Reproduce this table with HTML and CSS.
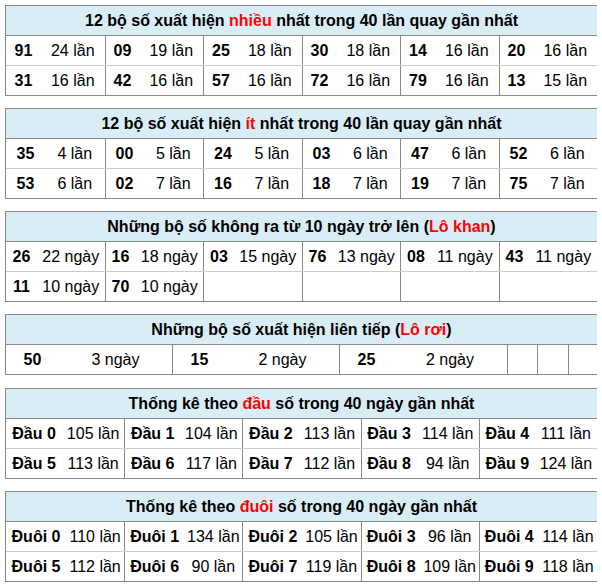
FILE: index.html
```html
<!DOCTYPE html>
<html lang="vi">
<head>
<meta charset="utf-8">
<title>Thống kê lô</title>
<link rel="stylesheet" href="styles.css">
</head>
<body>
<section class="box t1">
  <div class="head">12 bộ số xuất hiện <span class="red">nhiều</span> nhất trong 40 lần quay gần nhất</div>
  <div class="row">
    <div class="n">91</div><div class="v">24 lần</div>
    <div class="n">09</div><div class="v">19 lần</div>
    <div class="n">25</div><div class="v">18 lần</div>
    <div class="n">30</div><div class="v">18 lần</div>
    <div class="n">14</div><div class="v">16 lần</div>
    <div class="n">20</div><div class="v">16 lần</div>
  </div>
  <div class="row">
    <div class="n">31</div><div class="v">16 lần</div>
    <div class="n">42</div><div class="v">16 lần</div>
    <div class="n">57</div><div class="v">16 lần</div>
    <div class="n">72</div><div class="v">16 lần</div>
    <div class="n">79</div><div class="v">16 lần</div>
    <div class="n">13</div><div class="v">15 lần</div>
  </div>
</section>

<section class="box t2">
  <div class="head">12 bộ số xuất hiện <span class="red">ít</span> nhất trong 40 lần quay gần nhất</div>
  <div class="row">
    <div class="n">35</div><div class="v">4 lần</div>
    <div class="n">00</div><div class="v">5 lần</div>
    <div class="n">24</div><div class="v">5 lần</div>
    <div class="n">03</div><div class="v">6 lần</div>
    <div class="n">47</div><div class="v">6 lần</div>
    <div class="n">52</div><div class="v">6 lần</div>
  </div>
  <div class="row">
    <div class="n">53</div><div class="v">6 lần</div>
    <div class="n">02</div><div class="v">7 lần</div>
    <div class="n">16</div><div class="v">7 lần</div>
    <div class="n">18</div><div class="v">7 lần</div>
    <div class="n">19</div><div class="v">7 lần</div>
    <div class="n">75</div><div class="v">7 lần</div>
  </div>
</section>

<section class="box t3">
  <div class="head">Những bộ số không ra từ 10 ngày trở lên (<span class="red">Lô khan</span>)</div>
  <div class="row">
    <div class="n">26</div><div class="v">22 ngày</div>
    <div class="n">16</div><div class="v">18 ngày</div>
    <div class="n">03</div><div class="v">15 ngày</div>
    <div class="n">76</div><div class="v">13 ngày</div>
    <div class="n">08</div><div class="v">11 ngày</div>
    <div class="n">43</div><div class="v">11 ngày</div>
  </div>
  <div class="row">
    <div class="n">11</div><div class="v">10 ngày</div>
    <div class="n">70</div><div class="v">10 ngày</div>
    <div class="e span2"></div>
    <div class="e span2"></div>
    <div class="e span2"></div>
    <div class="e span2"></div>
  </div>
</section>

<section class="box t4">
  <div class="head">Những bộ số xuất hiện liên tiếp (<span class="red">Lô rơi</span>)</div>
  <div class="row">
    <div class="n">50</div><div class="v">3 ngày</div>
    <div class="n">15</div><div class="v">2 ngày</div>
    <div class="n">25</div><div class="v">2 ngày</div>
    <div class="e"></div>
    <div class="e"></div>
    <div class="e"></div>
  </div>
</section>

<section class="box t5">
  <div class="head">Thống kê theo <span class="red">đầu</span> số trong 40 ngày gần nhất</div>
  <div class="row">
    <div class="n">Đầu 0</div><div class="v">105 lần</div>
    <div class="n">Đầu 1</div><div class="v">104 lần</div>
    <div class="n">Đầu 2</div><div class="v">113 lần</div>
    <div class="n">Đầu 3</div><div class="v">114 lần</div>
    <div class="n">Đầu 4</div><div class="v">111 lần</div>
  </div>
  <div class="row">
    <div class="n">Đầu 5</div><div class="v">113 lần</div>
    <div class="n">Đầu 6</div><div class="v">117 lần</div>
    <div class="n">Đầu 7</div><div class="v">112 lần</div>
    <div class="n">Đầu 8</div><div class="v">94 lần</div>
    <div class="n">Đầu 9</div><div class="v">124 lần</div>
  </div>
</section>

<section class="box t6">
  <div class="head">Thống kê theo <span class="red">đuôi</span> số trong 40 ngày gần nhất</div>
  <div class="row">
    <div class="n">Đuôi 0</div><div class="v">110 lần</div>
    <div class="n">Đuôi 1</div><div class="v">134 lần</div>
    <div class="n">Đuôi 2</div><div class="v">105 lần</div>
    <div class="n">Đuôi 3</div><div class="v">96 lần</div>
    <div class="n">Đuôi 4</div><div class="v">114 lần</div>
  </div>
  <div class="row">
    <div class="n">Đuôi 5</div><div class="v">112 lần</div>
    <div class="n">Đuôi 6</div><div class="v">90 lần</div>
    <div class="n">Đuôi 7</div><div class="v">119 lần</div>
    <div class="n">Đuôi 8</div><div class="v">109 lần</div>
    <div class="n">Đuôi 9</div><div class="v">118 lần</div>
  </div>
</section>
</body>
</html>
```

FILE: styles.css
```css
* { box-sizing: border-box; }

body {
  margin: 5px;
  font-family: "Liberation Sans", Arial, sans-serif;
  font-size: 16px;
  color: #000;
  background: #fff;
}

.box {
  width: 593px;
  border: 1px solid #888;
  margin-bottom: 12px;
}

.t4 { margin-bottom: 13px; }

.head {
  height: 30px;
  padding-top: 1px;
  line-height: 28px;
  background: #d9edf7;
  border-bottom: 1px solid #888;
  text-align: center;
  font-weight: bold;
}

.red { color: #f00; }

.row {
  display: grid;
  height: 29px;
}

.row + .row {
  height: 30px;
  border-top: 1px solid #ccc;
}

.row > div {
  padding-top: 1px;
  line-height: 28px;
  text-align: center;
  white-space: nowrap;
}

.n {
  font-weight: bold;
  border-left: 1px solid #888;
}

.e {
  border-left: 1px solid #888;
}

.row > div:first-child { border-left: none; }

.span2 { grid-column: span 2; }

.t1 .row { grid-template-columns: repeat(6, 35px 1fr); }
.t2 .row { grid-template-columns: repeat(6, 39px 1fr); }
.t3 .row { grid-template-columns: repeat(6, 31px 1fr); }
.t4 .row { grid-template-columns: 53px 113px 54px 113px 54px 114px 30px 31px 29px; }
.t5 .row { grid-template-columns: repeat(5, 56px 1fr); }
.t6 .row { grid-template-columns: repeat(5, 60px 1fr); }
```
